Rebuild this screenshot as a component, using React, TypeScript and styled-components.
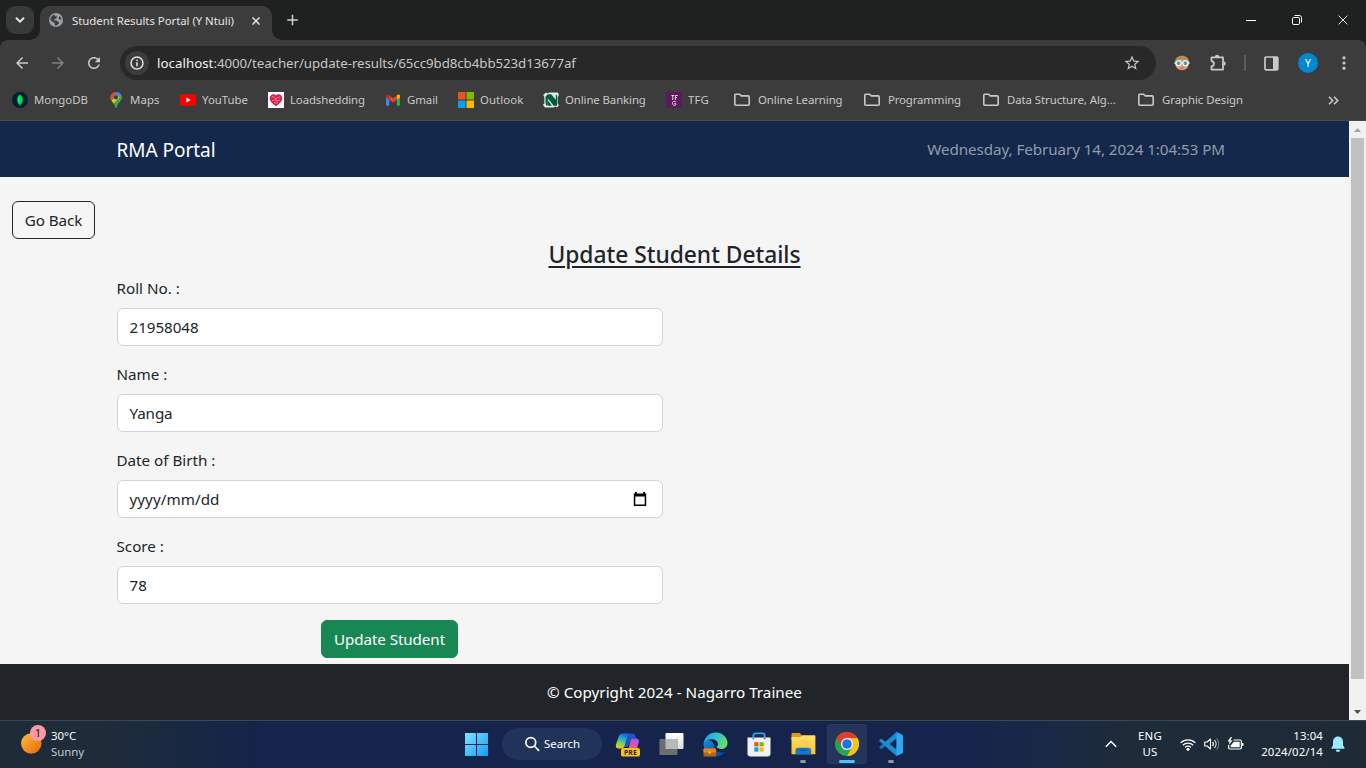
import React from "react";
import styled, { createGlobalStyle, css } from "styled-components";

const GlobalStyle = createGlobalStyle`
  *, *::before, *::after { box-sizing: border-box; }
  body {
    margin: 0;
    background: #1f2120;
    font-family: "Noto Sans", "Open Sans", sans-serif;
    overflow: hidden;
  }
  svg { display: block; flex: none; }
`;

const Screen = styled.div`
  width: 1366px;
  height: 768px;
  display: flex;
  flex-direction: column;
`;

/* ---------- Browser chrome ---------- */

const TitleBar = styled.header`
  height: 40px;
  flex: none;
  display: flex;
  align-items: flex-start;
  background: #1f2120;
  color: #e3e3e3;
`;

const TabSearch = styled.button`
  width: 28px;
  height: 28px;
  margin: 6px 6px 0;
  padding: 0;
  border: 0;
  border-radius: 9px;
  background: #383a39;
  color: #e8e8e8;
  display: grid;
  place-items: center;
`;

const Tab = styled.div`
  position: relative;
  width: 232px;
  height: 34px;
  margin-top: 6px;
  padding: 0 8px 0 9px;
  display: flex;
  align-items: center;
  border-radius: 10px 10px 0 0;
  background: #3c3c3c;

  &::before,
  &::after {
    content: "";
    position: absolute;
    bottom: 0;
    width: 10px;
    height: 10px;
  }
  &::before {
    left: -10px;
    background: radial-gradient(circle at 0 0, transparent 9.5px, #3c3c3c 10px);
  }
  &::after {
    right: -10px;
    background: radial-gradient(circle at 100% 0, transparent 9.5px, #3c3c3c 10px);
  }
`;

const TabTitle = styled.span`
  flex: 1;
  margin-left: 9px;
  padding-bottom: 4px;
  font-size: 11.4px;
  line-height: 16px;
  letter-spacing: -0.04px;
  white-space: nowrap;
`;

const TabClose = styled.span`
  width: 16px;
  padding-bottom: 5px;
  display: flex;
  justify-content: center;
`;

const TabFavicon = styled.span`
  padding-bottom: 6px;
`;

const NewTab = styled.span`
  margin: 14px 0 0 14.5px;
`;

const WindowButtons = styled.div`
  margin-left: auto;
  display: flex;
  height: 40px;
`;

const WindowButton = styled.span`
  width: 46px;
  display: grid;
  place-items: center;
`;

const Toolbar = styled.div`
  height: 46px;
  flex: none;
  display: flex;
  align-items: center;
  padding-left: 4px;
  border-radius: 8px 8px 0 0;
  background: #3c3c3c;
  color: #c7c7c7;
`;

const ToolButton = styled.span<{ $w?: number; $dim?: boolean }>`
  width: ${(p) => p.$w ?? 36}px;
  height: 34px;
  flex: none;
  display: grid;
  place-items: center;
  color: ${(p) => (p.$dim ? "#7f7f7f" : "#c9c9c9")};
`;

const Omnibox = styled.div`
  width: 1036px;
  height: 34px;
  margin-left: 8px;
  padding: 0 15px 0 5px;
  flex: none;
  display: flex;
  align-items: center;
  border-radius: 17px;
  background: #282828;
`;

const SiteInfo = styled.span`
  width: 24px;
  height: 24px;
  border-radius: 50%;
  background: #3c3c3c;
  display: grid;
  place-items: center;
  color: #e3e3e3;
`;

const Url = styled.span`
  flex: 1;
  margin-left: 8px;
  font-size: 13.3px;
  line-height: 18px;
  letter-spacing: -0.065px;
  color: #c7c7c7;
  white-space: nowrap;
  b { font-weight: 400; color: #f1f1f1; letter-spacing: 0.03px; }
`;

const Divider = styled.span`
  width: 2px;
  height: 16px;
  margin: 0 8px;
  background: #5c5c5c;
`;

const Profile = styled.span`
  width: 20px;
  height: 20px;
  border-radius: 50%;
  background: #0288d1;
  color: #fff;
  font-size: 10.5px;
  line-height: 20px;
  text-align: center;
`;

const BookmarkBar = styled.nav`
  height: 35px;
  flex: none;
  display: flex;
  align-items: flex-start;
  padding: 6px 24px 0 12px;
  border-bottom: 1px solid #4b4b4b;
  background: #3c3c3c;
  color: #c9c9c9;
`;

const Bookmark = styled.span<{ $w: number; $folder?: boolean; $ls?: number }>`
  width: ${(p) => p.$w}px;
  height: 16px;
  flex: none;
  display: flex;
  align-items: center;
  gap: ${(p) => (p.$folder ? 8 : 6)}px;
  font-size: 11.4px;
  line-height: 16px;
  letter-spacing: ${(p) => p.$ls ?? -0.05}px;
  white-space: nowrap;
`;

const MoreBookmarks = styled.span`
  height: 16px;
  margin-left: auto;
  margin-right: 3px;
  display: flex;
  align-items: center;
`;

/* ---------- Web page ---------- */

const Viewport = styled.div`
  height: 599px;
  flex: none;
  display: flex;
`;

const Page = styled.div`
  width: 1349px;
  display: flex;
  flex-direction: column;
  background: #f5f5f5;
  color: #212529;
  font-size: 15.2px;
  line-height: 24px;
`;

const NavBar = styled.div`
  height: 56px;
  flex: none;
  background: #14284b;
`;

const Container = styled.div`
  width: 1140px;
  margin: 0 auto;
  padding: 0 12px;
`;

const NavInner = styled(Container)`
  height: 56px;
  display: flex;
  align-items: center;
  justify-content: space-between;
`;

const Brand = styled.span`
  padding-top: 2px;
  font-size: 19px;
  line-height: 30px;
  letter-spacing: -0.04px;
  color: #fff;
`;

const Clock = styled.span`
  padding-right: 7.5px;
  letter-spacing: -0.07px;
  color: #919bab;
`;

const Main = styled.main`
  flex: 1;
  padding-top: 24px;
`;

const Button = styled.button<{ $variant: "outline" | "success" }>`
  height: 38px;
  padding: 0;
  font: inherit;
  letter-spacing: -0.08px;
  border-radius: 6px;
  ${(p) =>
    p.$variant === "outline"
      ? css`
          width: 83px;
          margin-left: 12px;
          border: 1px solid #212529;
          background: transparent;
          color: #212529;
        `
      : css`
          width: 137px;
          border: 1px solid #198754;
          background: #198754;
          color: #fff;
        `}
`;

const BackRow = styled.div`
  height: 38px;
  display: flex;
`;

const Heading = styled.h4`
  margin: 0 0 6px;
  padding-top: 2px;
  font-size: 22.8px;
  font-weight: 500;
  line-height: 28.8px;
  letter-spacing: -0.02px;
  text-align: center;
  text-decoration: underline;
  text-decoration-thickness: 2px;
  text-underline-offset: 3px;
`;

const Form = styled.div`
  width: 546px;
  display: flex;
  flex-direction: column;
`;

const Label = styled.label`
  margin-bottom: 8px;
  height: 24px;
`;

const Field = styled.div<{ $ls?: number }>`
  height: 38px;
  margin-bottom: 16px;
  padding: 0 11px 0 12px;
  display: flex;
  align-items: center;
  justify-content: space-between;
  border: 1px solid #ced4da;
  border-radius: 6px;
  background: #fff;
  letter-spacing: ${(p) => p.$ls ?? -0.06}px;
`;

const Submit = styled.div`
  display: flex;
  justify-content: center;
`;

const Footer = styled.footer`
  height: 56px;
  flex: none;
  display: grid;
  place-items: center;
  background: #212529;
  color: #fff;
  letter-spacing: 0.03px;
`;

const ScrollBar = styled.div`
  width: 17px;
  height: 599px;
  display: flex;
  flex-direction: column;
  align-items: center;
  justify-content: space-between;
  background: #f1f1f1;
`;

const ScrollArrow = styled.span<{ $down?: boolean }>`
  height: 17px;
  display: flex;
  align-items: center;
  color: ${(p) => (p.$down ? "#505050" : "#a3a3a3")};
`;

const Thumb = styled.span`
  width: 13px;
  height: 541px;
  margin-bottom: auto;
  background: #c1c1c1;
`;

/* ---------- Taskbar ---------- */

const Taskbar = styled.div`
  flex: 1;
  display: flex;
  align-items: center;
  box-shadow: inset 0 1px 0 #3e4754;
  background: linear-gradient(90deg, #1f2c37 0, #1e2c3a 110px, #14244a 260px, #14244c 950px, #192847 1040px, #1e2b38 1130px, #1e2b37 100%);
  color: #fff;
  font-size: 11.4px;
  line-height: 16px;
`;

const Weather = styled.div`
  width: 454px;
  padding-left: 21px;
  display: flex;
  align-items: center;
`;

const WeatherIcon = styled.span`
  position: relative;
  width: 30px;
  padding-bottom: 2px;
`;

const Badge = styled.span`
  position: absolute;
  left: 9px;
  top: -8px;
  width: 16px;
  height: 16px;
  border-radius: 50%;
  background: #fb9aa6;
  color: #111;
  font-size: 10.5px;
  line-height: 16px;
  text-align: center;
`;

const TwoLines = styled.div<{ $align?: string }>`
  display: flex;
  flex-direction: column;
  text-align: ${(p) => p.$align ?? "left"};
`;

const Muted = styled.span`
  color: #c3c9d0;
`;

const StartCell = styled.span`
  width: 48px;
  padding-left: 11px;
`;

const SearchPill = styled.span`
  width: 100px;
  height: 32px;
  margin-right: 3px;
  padding-left: 22px;
  display: flex;
  align-items: center;
  gap: 4px;
  border-radius: 16px;
  background: #22335a;
`;

const AppCell = styled.span<{ $active?: boolean }>`
  position: relative;
  width: 40px;
  height: 40px;
  margin: 0 2px;
  flex: none;
  display: grid;
  place-items: center;
  border-radius: 4px;
  ${(p) =>
    p.$active &&
    css`
      background: #253559;
      box-shadow: inset 0 0 0 1px #2b3a5d;
    `}
`;

const Indicator = styled.i<{ $active?: boolean }>`
  position: absolute;
  left: ${(p) => (p.$active ? 12 : 17)}px;
  bottom: 1px;
  width: ${(p) => (p.$active ? 16 : 6)}px;
  height: 3px;
  border-radius: 2px;
  background: ${(p) => (p.$active ? "#4cc2ff" : "#8f98a8")};
`;

const Tray = styled.div`
  margin-left: auto;
  padding-right: 21px;
  display: flex;
  align-items: center;
`;

const TrayGroup = styled.div<{ $gap: number; $ml: number }>`
  display: flex;
  align-items: center;
  gap: ${(p) => p.$gap}px;
  margin-left: ${(p) => p.$ml}px;
`;

const Language = styled(TwoLines)`
  width: 26px;
  margin-left: 20px;
  letter-spacing: 0.2px;
`;

const DateTime = styled(TwoLines)`
  width: 64px;
  letter-spacing: 0.12px;
`;

/* ---------- Icons ---------- */

const Filled = ({ d, size }: { d: string; size: number }) => (
  <svg width={size} height={size} viewBox="0 0 24 24" fill="currentColor">
    <path d={d} />
  </svg>
);

const BACK = "M20 11H7.83l5.59-5.59L12 4l-8 8 8 8 1.41-1.41L7.83 13H20v-2z";
const FORWARD = "M4 13h12.17l-5.59 5.59L12 20l8-8-8-8-1.41 1.41L16.17 11H4v2z";
const RELOAD =
  "M17.65 6.35C16.2 4.9 14.21 4 12 4c-4.42 0-7.99 3.58-7.99 8s3.57 8 7.99 8c3.73 0 6.84-2.55 7.73-6h-2.08c-.82 2.33-3.04 4-5.65 4-3.31 0-6-2.69-6-6s2.69-6 6-6c1.66 0 3.14.69 4.22 1.78L13 11h7V4l-2.35 2.35z";
const STAR =
  "M22 9.24l-7.19-.62L12 2 9.19 8.63 2 9.24l5.46 4.73L5.82 21 12 17.27 18.18 21l-1.63-7.03L22 9.24zM12 15.4l-3.76 2.27 1-4.28-3.32-2.88 4.38-.38L12 6.1l1.71 4.04 4.38.38-3.32 2.88 1 4.28L12 15.4z";

const Chevron = () => (
  <svg width="10" height="6" viewBox="0 0 10 6" fill="none" stroke="currentColor" strokeWidth="1.9">
    <path d="M1 .8 5 4.7 9 .8" />
  </svg>
);

const Globe = () => (
  <svg width="14" height="14" viewBox="0 0 14 14">
    <circle cx="7" cy="7" r="7" fill="#9aa0a6" />
    <path d="M5.6 1.4C5 3 6.600 3.300 8 3.500c.4 1-.6 1.500-1.400 1.800.1 1.100-.6 1.400-1.600 1.300-.4 1 .8.900 1.900.8 1.400.2 1.600 1.400 2.900 1.500.6 1.200-.8 2.300-1.600 3.200-.6.500-1.800.7-2.400.4l.3-1.700C5.500 9.500 3 8.600 1.300 6.700 1.400 4 3.300 1.900 5.600 1.400z" fill="#3c3c3c" />
    <path d="M10 3.200c1.200.2 2.300 1.700 2.500 3.300-1 .4-2.200.2-2.600-.8-.3-.9.400-1.500.1-2.500z" fill="#3c3c3c" />
  </svg>
);

const Cross = ({ size, w }: { size: number; w: number }) => (
  <svg width={size} height={size} viewBox="0 0 10 10" fill="none" stroke="currentColor" strokeWidth={w}>
    <path d="M.6.6l8.800 8.800M9.400.6.6 9.400" />
  </svg>
);

const Plus = () => (
  <svg width="11" height="12" viewBox="0 0 11 12" stroke="#d0d0d0" strokeWidth="1.500">
    <path d="M5.500.7v10.600M.2 6h10.600" />
  </svg>
);

const Info = () => (
  <svg width="14" height="14" viewBox="0 0 14 14" fill="none" stroke="currentColor" strokeWidth="1.500">
    <circle cx="7" cy="7" r="6" />
    <path d="M7 6.200v4M7 3.700v1.400" strokeWidth="1.600" />
  </svg>
);

const Puzzle = () => (
  <svg width="18" height="18" viewBox="0 0 18 18">
    <path
      d="M2.500 3.400H14v12.200H2.500v-3.300c1.500-.2 2.400-1.200 2.400-2.600S4 7.300 2.500 7.100z"
      fill="none"
      stroke="currentColor"
      strokeWidth="1.800"
      strokeLinejoin="round"
    />
    <path d="M5.900 3a2.200 2.200 0 0 1 4.400 0zM14.500 7.300a2.200 2.200 0 0 1 0 4.400z" fill="currentColor" />
  </svg>
);

const GogglesFace = () => (
  <svg width="16" height="16" viewBox="0 0 16 16">
    <circle cx="8" cy="8.300" r="7" fill="#e09a72" />
    <path d="M.8 7.500C1 3 4 .8 8 .8s7 2.200 7.200 6.700L12 5.200 8 4.400 4 5.200z" fill="#b08d5b" />
    <path d="M.4 7.300h15.200v1.500H.4z" fill="#dfe8ec" />
    <circle cx="4.600" cy="8.200" r="2.500" fill="#4e9fb5" stroke="#f2f6f7" strokeWidth="1.200" />
    <circle cx="11.400" cy="8.200" r="2.500" fill="#4e9fb5" stroke="#f2f6f7" strokeWidth="1.200" />
    <path d="M6.300 13h3.400" stroke="#b96c4d" />
  </svg>
);

const SidePanel = () => (
  <svg width="15" height="15" viewBox="0 0 15 15">
    <rect x="1" y="1" width="12.800" height="12.800" rx="1" fill="none" stroke="currentColor" strokeWidth="1.700" />
    <path d="M9 1h5v13H9z" fill="currentColor" />
  </svg>
);

const Dots = () => (
  <svg width="4" height="14" viewBox="0 0 4 14" fill="currentColor">
    <circle cx="2" cy="1.800" r="1.600" />
    <circle cx="2" cy="7" r="1.600" />
    <circle cx="2" cy="12.200" r="1.600" />
  </svg>
);

const Folder = () => (
  <svg width="16" height="14" viewBox="0 0 16 14" fill="none" stroke="currentColor" strokeWidth="1.600">
    <path d="M.8 2.200q0-1 1-1h3.700l1.800 1.700h6.900q1 0 1 1v7.300q0 1-1 1H1.800q-1 0-1-1z" />
  </svg>
);

const MongoIcon = () => (
  <svg width="16" height="16" viewBox="0 0 16 16">
    <circle cx="8" cy="8" r="8" fill="#001e2b" />
    <path d="M8 2.200c.5 1.200 2.800 2.500 2.800 5.600 0 2.300-1.400 3.900-2.400 4.700L8.200 14h-.5l-.2-1.500C6.500 11.700 5.200 10.100 5.200 7.800c0-3.100 2.300-4.400 2.800-5.600z" fill="#00ed64" />
    <path d="M8 2.200c.5 1.200 2.800 2.500 2.800 5.600 0 2.300-1.400 3.900-2.400 4.700L8.200 14z" fill="#00c853" />
  </svg>
);

const MapsIcon = () => (
  <svg width="16" height="16" viewBox="0 0 16 16">
    <clipPath id="pin">
      <path d="M8 0a5.600 5.600 0 0 1 5.600 5.600c0 3.800-4.100 5-4.900 9.400-.2.900-1.200.9-1.400 0C6.500 10.600 2.400 9.400 2.400 5.600A5.600 5.600 0 0 1 8 0z" />
    </clipPath>
    <g clipPath="url(#pin)">
      <path d="M0 0h16v16H0z" fill="#34a853" />
      <path d="M0 0h9L2 9z" fill="#ea4335" />
      <path d="M5.500 0H16v2L8 9 5 6l5-6z" fill="#4285f4" />
      <path d="M0 0h6.500L6 5 2 7z" fill="#ea4335" />
      <path d="M2 9.800 12.800 1 14 4 5 13.500z" fill="#fbbc04" />
      <path d="M9 0h6v3.500L11.500 5 8 4z" fill="#4285f4" />
      <path d="M14 2v14H5l-.5-3.500 9-9z" fill="#34a853" />
    </g>
    <circle cx="8" cy="5.600" r="2" fill="#3c3c3c" />
  </svg>
);

const YouTubeIcon = () => (
  <svg width="16" height="16" viewBox="0 0 16 16">
    <rect y="2.200" width="16" height="11.600" rx="3" fill="#f00" />
    <path d="M6.400 5.600v4.800L10.600 8z" fill="#fff" />
  </svg>
);

const LoadsheddingIcon = () => (
  <svg width="16" height="16" viewBox="0 0 16 16">
    <path d="M0 0h16v16H0z" fill="#fff" />
    <path d="M8 14.300C3.500 11.200 1.600 8.600 1.800 5.700 2 2.500 5.800 1.200 8 3.400c2.200-2.200 6-.9 6.200 2.300.2 2.900-1.700 5.500-6.200 8.600z" fill="#d81b45" />
    <path d="M3.500 5.600c1-1.200 2.500-1 3.300 0s2.200 1.300 2.900.2 2-1.200 2.900-.2M4 8.400h2.400l1-1.300 1.400 2.200 1-1H12M6 10.800h3.800" fill="none" stroke="#f7c3cf" strokeWidth=".7" />
  </svg>
);

const GmailIcon = () => (
  <svg width="16" height="16" viewBox="0 0 16 16">
    <path d="M1 3.800v9.200q0 .7.700.7h2.500V6.500z" fill="#4285f4" />
    <path d="M15 3.800v9.200q0 .7-.7.700h-2.500V6.500z" fill="#34a853" />
    <path d="M11.800 3.500 13 2.700c1-.6 2 0 2 1.200v1.400l-3.200 2.400z" fill="#fbbc04" />
    <path d="M4.200 3.500 3 2.700C2 2.100 1 2.700 1 3.900v1.400l3.200 2.400z" fill="#c5221f" />
    <path d="M4.200 3.400 8 6.300l3.800-2.900v4.300L8 10.600 4.200 7.700z" fill="#ea4335" />
  </svg>
);

const Squares = ({ size, gap, colors }: { size: number; gap: number; colors: string[] }) => {
  const s = (size - gap) / 2;
  return (
    <svg width={size} height={size} viewBox={`0 0 ${size} ${size}`}>
      {colors.map((c, i) => (
        <rect key={i} x={(i % 2) * (s + gap)} y={i > 1 ? s + gap : 0} width={s} height={s} fill={c} />
      ))}
    </svg>
  );
};

const NedbankIcon = () => (
  <svg width="16" height="16" viewBox="0 0 16 16">
    <path d="M1 2.200 3 .6l1.500 1L6 .6h2l7-.1.900 2.500-.9 1.200v7.600l.9 1.500-1.900 2.300-1.500-1-2 1H2L0 13l1-1.500V4.500L.2 3z" fill="#dcebe4" />
    <path d="M1.500 5.200 2.600 4v7.200L1.500 12zM14.500 4.500l-1 1v6l1 .8z" fill="#2c8464" />
    <path d="M5 2.200h3.200l4.600 5.600V2.600l1.200.8v10.400h-3.400L4.800 6.600V13l-1.800.8V4z" fill="#005c3c" />
    <path d="M4.800 8.600 9 13.800H4.800z" fill="#005c3c" />
  </svg>
);

const TfgIcon = () => (
  <svg width="16" height="16" viewBox="0 0 16 16">
    <path d="M0 0h16v16H0z" fill="#5b1a5e" />
    <path d="M5.300 3.500h2.900M6.700 3.500V8M9.300 8V3.500h2.400M9.300 5.600h1.800M9.800 9.600c-1.600-.9-3.400 0-3.400 1.700s1.800 2.500 3.400 1.600v-1.500H8.400" fill="none" stroke="#f0e6f0" strokeWidth=".9" />
  </svg>
);

const DoubleChevron = () => (
  <svg width="11" height="9" viewBox="0 0 11 9" fill="none" stroke="currentColor" strokeWidth="1.600">
    <path d="M1 .7l3.700 3.800L1 8.300M6 .7l3.700 3.800L6 8.300" />
  </svg>
);

const CalendarIcon = () => (
  <svg width="20" height="16" viewBox="0 0 20 16">
    <path d="M4 .9h1.800v1.500h6.400V.9H14v1.500h1.200V15H2.800V2.400H4zM4.300 5.600v8h9.400v-8z" fill="#000" fillRule="evenodd" />
  </svg>
);

const Triangle = ({ down }: { down?: boolean }) => (
  <svg width="7" height="4" viewBox="0 0 7 4" fill="currentColor">
    <path d={down ? "M0 0h7L3.500 4z" : "M0 4h7L3.500 0z"} />
  </svg>
);

const Sun = () => (
  <svg width="21" height="21" viewBox="0 0 21 21">
    <linearGradient id="sun" x1="0" y1="0" x2="1" y2="1">
      <stop offset=".1" stopColor="#f6b73c" />
      <stop offset=".9" stopColor="#ef6c0a" />
    </linearGradient>
    <circle cx="10.300" cy="10.500" r="10.200" fill="url(#sun)" />
  </svg>
);

const StartIcon = () => (
  <svg width="23" height="23" viewBox="0 0 23 23">
    <linearGradient id="win" x1="0" y1="0" x2="1" y2="1" gradientUnits="objectBoundingBox">
      <stop offset="0" stopColor="#7fe3ff" />
      <stop offset="1" stopColor="#129cf5" />
    </linearGradient>
    <path d="M0 0h11v11H0zM12 0h11v11H12zM0 12h11v11H0zM12 12h11v11H12z" fill="url(#win)" />
  </svg>
);

const SearchIcon = () => (
  <svg width="16" height="16" viewBox="0 0 16 16" fill="none" stroke="#fff" strokeWidth="1.700">
    <circle cx="6.800" cy="6.500" r="4.900" />
    <path d="M10.300 10l4.300 4.300" strokeLinecap="round" />
  </svg>
);

const CopilotIcon = () => (
  <svg width="25" height="25" viewBox="0 0 25 25">
    <linearGradient id="cpl" x1=".6" y1="0" x2=".3" y2="1">
      <stop offset="0" stopColor="#1a5fd8" />
      <stop offset=".35" stopColor="#22a9d6" />
      <stop offset=".65" stopColor="#7ccf5a" />
      <stop offset="1" stopColor="#f2c81f" />
    </linearGradient>
    <linearGradient id="cpr" x1=".7" y1="0" x2=".3" y2="1">
      <stop offset="0" stopColor="#a259e8" />
      <stop offset=".5" stopColor="#e2569b" />
      <stop offset="1" stopColor="#f58a52" />
    </linearGradient>
    <path d="M8.500 1.500h9c2 0 2.600 1.300 3.100 3l.6 2h-5L13 15H9z" fill="#1d55c4" />
    <path d="M8.500 1.500H15c-1.500 0-2.300 1.200-2.800 3L9.800 13c-.7 2.400-1.700 3.500-3.800 3.500H3.600C1.200 16.500.4 14.700 1 12.500L3.600 4.800C4.500 2.500 6 1.500 8.500 1.500z" fill="url(#cpl)" />
    <path d="M17.300 6.500h3.900c2.400 0 3.200 1.800 2.600 4l-2.500 8.200c-.7 2.200-2.200 3.300-4.700 3.300H10c1.600 0 2.300-1.200 2.900-3L15.200 10c.5-2 1-3.500 2.100-3.500z" fill="url(#cpr)" />
    <rect x="6" y="16" width="19" height="8.600" rx="2.200" fill="#ffc20a" />
    <text x="15.500" y="22.900" textAnchor="middle" fontFamily="Noto Sans, sans-serif" fontSize="6.700" fontWeight="700" letterSpacing=".3" fill="#1b1b1b">PRE</text>
  </svg>
);

const TaskViewIcon = () => (
  <svg width="25" height="24" viewBox="0 0 25 24">
    <linearGradient id="tv" x1="0" y1="0" x2="0" y2="1">
      <stop offset="0" stopColor="#fff" />
      <stop offset="1" stopColor="#dcdcdc" />
    </linearGradient>
    <rect x="6.500" y="1" width="18" height="16" rx="1" fill="url(#tv)" />
    <rect x=".5" y="7" width="18" height="16" rx="1" fill="#6e6e70" />
    <path d="M6.500 7h12v10h-12z" fill="#b9b9bb" />
  </svg>
);

const EdgeIcon = () => (
  <svg width="25" height="25" viewBox="0 0 25 25">
    <linearGradient id="eg" x1="0" y1=".2" x2="1" y2=".5">
      <stop offset="0" stopColor="#1b9de2" />
      <stop offset=".5" stopColor="#33c1d6" />
      <stop offset="1" stopColor="#6be05a" />
    </linearGradient>
    <linearGradient id="eb" x1="0" y1="0" x2="1" y2="1">
      <stop offset="0" stopColor="#1a8be0" />
      <stop offset="1" stopColor="#0c3f8c" />
    </linearGradient>
    <path d="M.6 12.500C.6 18.700 5.600 24.500 12.500 24.500c4 0 7.500-2 9.400-4.800-4 1.800-10.400.3-10.400-5.200 0-3-3-6.500-6.500-6.500S.8 10.500.6 12.500z" fill="url(#eb)" />
    <path d="M.6 11.500C1.500 5 6.500.5 12.500.5c7 0 12 5 12 10.500 0 3.500-2.500 6-6 6-2.700 0-4.800-.8-4.800-1.900 0-.8 1.300-1.200 1.300-3.100 0-2.700-3-4.800-6.500-4.800-3.600 0-6.500 1.700-7.900 4.300z" fill="url(#eg)" />
    <rect x=".5" y="16.500" width="12.500" height="8" rx="1" fill="#b8650f" />
    <path d="M.5 17.500q0-1 1-1H12q1 0 1 1v3H.5z" fill="#e08a1e" />
    <path d="M5.800 19.500h2v2h-2z" fill="#ffd35c" />
  </svg>
);

const StoreIcon = () => (
  <svg width="24" height="25" viewBox="0 0 24 25">
    <path d="M6.400 7V3.300q0-2 2-2h7.200q2 0 2 2V7" fill="none" stroke="#29a9ea" strokeWidth="1.800" />
    <path d="M.5 5.500h23v15.800q0 3.200-3.200 3.200H3.700Q.5 24.500.5 21.300z" fill="#f1f1f1" />
    <path d="M6.400 5.500v1.800M17.600 5.500v1.800" stroke="#1b87c9" strokeWidth="1.800" />
    <path d="M7.300 10.200h4.200v4.200H7.300z" fill="#f25022" />
    <path d="M12.500 10.200h4.200v4.200h-4.200z" fill="#7fba00" />
    <path d="M7.300 15.400h4.200v4.200H7.300z" fill="#00a4ef" />
    <path d="M12.500 15.400h4.200v4.200h-4.200z" fill="#ffb900" />
  </svg>
);

const ExplorerIcon = () => (
  <svg width="25" height="24" viewBox="0 0 25 24">
    <linearGradient id="fx" x1="0" y1="0" x2="0" y2="1">
      <stop offset="0" stopColor="#ffdf70" />
      <stop offset="1" stopColor="#fbbf2c" />
    </linearGradient>
    <path d="M.5 2.200q0-1.200 1.200-1.200h7l2.300 2.500V8H.5z" fill="#e09c12" />
    <path d="M.5 5h9l1.700-1.800h12.200q1 0 1 1v18H.5z" fill="url(#fx)" />
    <path d="M4.500 22.200v-3.700q0-2.800 2.800-2.800h10q2.800 0 2.800 2.800v3.700z" fill="#1479cc" />
    <path d="M8.500 18.200h7.500" stroke="#0d5ea6" strokeWidth="1.500" />
  </svg>
);

const ChromeIcon = () => (
  <svg width="24" height="24" viewBox="0 0 24 24">
    <circle cx="12" cy="12" r="12" fill="#2ba24c" />
    <path d="M12 0a12 12 0 0 1 10.400 6H12a6 6 0 0 0-5.200 3L1.600 6A12 12 0 0 1 12 0z" fill="#e33b2e" />
    <path d="M1.600 6 6.800 15 12 12V0A12 12 0 0 0 1.600 6z" fill="#e33b2e" />
    <path d="M22.400 6A12 12 0 0 1 12 24l5.200-9L12 6z" fill="#fbc116" />
    <circle cx="12" cy="12" r="6" fill="#fff" />
    <circle cx="12" cy="12" r="4.800" fill="#1a73e8" />
  </svg>
);

const VsCodeIcon = () => (
  <svg width="24" height="24" viewBox="0 0 24 24">
    <path d="M17.500 24 6.800 14 2.500 17.200.4 16v-1.200L17.500 0l.6 6.500z" fill="#1173b8" />
    <path d="M17.500 0 6.800 10 2.500 6.800.4 8v1.200L17.500 24l.6-6.500z" fill="#1e8ad2" />
    <path d="M17.500 6.600v10.800L10.600 12z" fill="#17274f" />
    <path d="M17.500 0 23 2.500q1 .5 1 1.500v16q0 1-1 1.500L17.500 24z" fill="#2fa8f4" />
  </svg>
);

const UpChevron = () => (
  <svg width="12" height="8" viewBox="0 0 12 8" fill="none" stroke="#fff" strokeWidth="1.400">
    <path d="M.8 6.800 6 1.600l5.200 5.200" />
  </svg>
);

const WifiIcon = () => (
  <svg width="16" height="13" viewBox="0 0 16 13" fill="none" stroke="#fff" strokeWidth="1.200">
    <path d="M.6 4.900a10.500 10.500 0 0 1 14.800 0M2.800 7.200a7.400 7.400 0 0 1 10.400 0M5 9.400a4.200 4.200 0 0 1 6 0" />
    <circle cx="8" cy="11.200" r="1.500" fill="#fff" stroke="none" />
  </svg>
);

const SpeakerIcon = () => (
  <svg width="16" height="14" viewBox="0 0 16 14" fill="none" stroke="#fff" strokeWidth="1.100">
    <path d="M.7 5v4h2.500l3.300 3V2L3.200 5z" strokeLinejoin="round" />
    <path d="M8.500 4.800a3.400 3.400 0 0 1 0 4.400M10.500 3a6 6 0 0 1 0 8" />
    <path d="M12.600 1.300a8.600 8.600 0 0 1 0 11.400" stroke="#6d7680" />
  </svg>
);

const BatteryIcon = () => (
  <svg width="17" height="14" viewBox="0 0 17 14">
    <path d="M6.500 3H13q1.400 0 1.400 1.400v6.200q0 1.400-1.400 1.400H3q-1.400 0-1.400-1.400V8" fill="none" stroke="#fff" strokeWidth="1.200" />
    <path d="M15 6h.7q.8 0 .8.800v1.400q0 .8-.8.800H15z" fill="#fff" />
    <path d="M6.800 4.800h5.900v5.400H3.700V8.500z" fill="#fff" />
    <path d="M3.700 0 .6 4.600h2L1.800 8 5.600 3.400H3.500L5 0z" fill="#fff" />
  </svg>
);

const BellIcon = () => (
  <svg width="14" height="16" viewBox="0 0 14 16" fill="#99ebff">
    <path d="M7 .5a5 5 0 0 1 5 5v3.800l1.500 2.500q.3.900-.6.900H1.100q-.9 0-.6-.9L2 9.300V5.500a5 5 0 0 1 5-5zM4.800 13.700h4.400a2.200 2.200 0 0 1-4.400 0z" />
  </svg>
);

/* ---------- Data ---------- */

const sites = [
  { name: "MongoDB", w: 96, ls: 0.02, icon: <MongoIcon /> },
  { name: "Maps", w: 72, ls: 0.08, icon: <MapsIcon /> },
  { name: "YouTube", w: 88, ls: 0, icon: <YouTubeIcon /> },
  { name: "Loadshedding", w: 117, ls: -0.1, icon: <LoadsheddingIcon /> },
  { name: "Gmail", w: 73, icon: <GmailIcon /> },
  { name: "Outlook", w: 85, ls: 0.09, icon: <Squares size={16} gap={1} colors={["#f25022", "#7fba00", "#00a4ef", "#ffb900"]} /> },
  { name: "Online Banking", w: 123, ls: -0.1, icon: <NedbankIcon /> },
  { name: "TFG", w: 68, ls: 0.15, icon: <TfgIcon /> },
];

const folders = [
  { name: "Online Learning", w: 130, ls: -0.08 },
  { name: "Programming", w: 119, ls: -0.13 },
  { name: "Data Structure, Alg...", w: 155, ls: -0.07 },
  { name: "Graphic Design", w: 120, ls: -0.05 },
];

const fields = [
  { label: "Roll No. :", value: "21958048" },
  { label: "Name :", value: "Yanga", ls: -0.12 },
  { label: "Date of Birth :", value: "yyyy/mm/dd", ls: 0.06, picker: true },
  { label: "Score :", value: "78" },
];

export default function App() {
  return (
    <Screen>
      <GlobalStyle />
      <TitleBar>
        <TabSearch><Chevron /></TabSearch>
        <Tab>
          <TabFavicon><Globe /></TabFavicon>
          <TabTitle>Student Results Portal (Y Ntuli)</TabTitle>
          <TabClose><Cross size={8} w={1.9} /></TabClose>
        </Tab>
        <NewTab><Plus /></NewTab>
        <WindowButtons>
          <WindowButton>
            <svg width="10" height="1" viewBox="0 0 10 1"><path d="M0 0h10v1H0z" fill="#fff" /></svg>
          </WindowButton>
          <WindowButton>
            <svg width="10" height="10" viewBox="0 0 10 10" fill="none" stroke="#fff">
              <rect x=".5" y="2.500" width="7" height="7" rx="1.200" />
              <path d="M2.500.5H7.300Q9.500.5 9.500 2.700V7.500" />
            </svg>
          </WindowButton>
          <WindowButton><Cross size={10} w={1} /></WindowButton>
        </WindowButtons>
      </TitleBar>

      <Toolbar>
        <ToolButton><Filled d={BACK} size={18} /></ToolButton>
        <ToolButton $dim><Filled d={FORWARD} size={18} /></ToolButton>
        <ToolButton><Filled d={RELOAD} size={18} /></ToolButton>
        <Omnibox>
          <SiteInfo><Info /></SiteInfo>
          <Url><b>localhost</b>:4000/teacher/update-results/65cc9bd8cb4bb523d13677af</Url>
          <Filled d={STAR} size={18} />
        </Omnibox>
        <ToolButton $w={52}><GogglesFace /></ToolButton>
        <ToolButton $w={20}><Puzzle /></ToolButton>
        <ToolButton $w={33}><Divider /></ToolButton>
        <ToolButton $w={21}><SidePanel /></ToolButton>
        <ToolButton $w={52}><Profile>Y</Profile></ToolButton>
        <ToolButton $w={20}><Dots /></ToolButton>
      </Toolbar>

      <BookmarkBar>
        {sites.map((s) => (
          <Bookmark key={s.name} $w={s.w} $ls={s.ls}>{s.icon}{s.name}</Bookmark>
        ))}
        {folders.map((f) => (
          <Bookmark key={f.name} $w={f.w} $ls={f.ls} $folder><Folder />{f.name}</Bookmark>
        ))}
        <MoreBookmarks><DoubleChevron /></MoreBookmarks>
      </BookmarkBar>

      <Viewport>
        <Page>
          <NavBar>
            <NavInner>
              <Brand>RMA Portal</Brand>
              <Clock>Wednesday, February 14, 2024 1:04:53 PM</Clock>
            </NavInner>
          </NavBar>
          <Main>
            <BackRow><Button $variant="outline">Go Back</Button></BackRow>
            <Heading>Update Student Details</Heading>
            <Container>
              <Form>
                {fields.map((f) => (
                  <React.Fragment key={f.label}>
                    <Label>{f.label}</Label>
                    <Field $ls={f.ls}>{f.value}{f.picker && <CalendarIcon />}</Field>
                  </React.Fragment>
                ))}
                <Submit><Button $variant="success">Update Student</Button></Submit>
              </Form>
            </Container>
          </Main>
          <Footer>© Copyright 2024 - Nagarro Trainee</Footer>
        </Page>
        <ScrollBar>
          <ScrollArrow><Triangle /></ScrollArrow>
          <Thumb />
          <ScrollArrow $down><Triangle down /></ScrollArrow>
        </ScrollBar>
      </Viewport>

      <Taskbar>
        <Weather>
          <WeatherIcon><Sun /><Badge>1</Badge></WeatherIcon>
          <TwoLines><span>30°C</span><Muted>Sunny</Muted></TwoLines>
        </Weather>
        <StartCell><StartIcon /></StartCell>
        <SearchPill><SearchIcon />Search</SearchPill>
        <AppCell><CopilotIcon /></AppCell>
        <AppCell><TaskViewIcon /></AppCell>
        <AppCell><EdgeIcon /></AppCell>
        <AppCell><StoreIcon /></AppCell>
        <AppCell><ExplorerIcon /><Indicator /></AppCell>
        <AppCell $active><ChromeIcon /><Indicator $active /></AppCell>
        <AppCell><VsCodeIcon /><Indicator /></AppCell>
        <Tray>
          <UpChevron />
          <Language $align="center"><span>ENG</span><span>US</span></Language>
          <TrayGroup $gap={7.5} $ml={17}><WifiIcon /><SpeakerIcon /><BatteryIcon /></TrayGroup>
          <TrayGroup $gap={8} $ml={15}>
            <DateTime $align="right"><span>13:04</span><span>2024/02/14</span></DateTime>
            <BellIcon />
          </TrayGroup>
        </Tray>
      </Taskbar>
    </Screen>
  );
}
